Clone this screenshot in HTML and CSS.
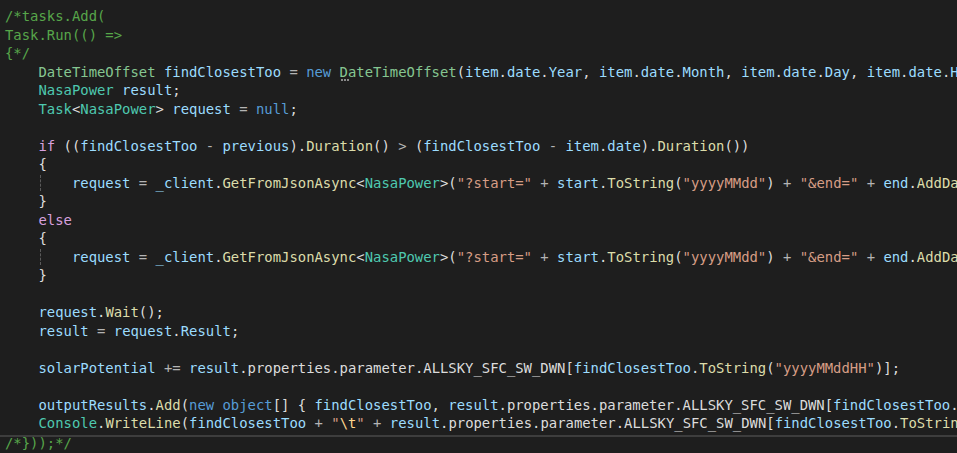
FILE: index.html
```html
<!DOCTYPE html>
<html>
<head>
<meta charset="utf-8">
<link rel="stylesheet" href="styles.css">
</head>
<body>
<div class="editor">
<div class="line"><span class="c">/*tasks.Add(</span></div>
<div class="line"><span class="c">Task.Run(() =&gt;</span></div>
<div class="line"><span class="c">{*/</span></div>
<div class="line">    <span class="s">DateTimeOffset</span> <span class="v">findClosestToo</span> <span class="o">=</span> <span class="k">new</span> <span class="s dots">DateTimeOffset</span>(<span class="v">item</span>.<span class="v">date</span>.<span class="v">Year</span>, <span class="v">item</span>.<span class="v">date</span>.<span class="v">Month</span>, <span class="v">item</span>.<span class="v">date</span>.<span class="v">Day</span>, <span class="v">item</span>.<span class="v">date</span>.<span class="v">Hour</span>, <span class="n">0</span>, <span class="n">0</span>, <span class="s">TimeSpan</span>.Zero);</div>
<div class="line">    <span class="t">NasaPower</span> <span class="v">result</span>;</div>
<div class="line">    <span class="t">Task</span>&lt;<span class="t">NasaPower</span>&gt; <span class="v">request</span> <span class="o">=</span> <span class="k">null</span>;</div>
<div class="line"> </div>
<div class="line">    <span class="x">if</span> ((<span class="v">findClosestToo</span> <span class="o">-</span> <span class="v">previous</span>).<span class="m">Duration</span>() <span class="o">&gt;</span> (<span class="v">findClosestToo</span> <span class="o">-</span> <span class="v">item</span>.<span class="v">date</span>).<span class="m">Duration</span>())</div>
<div class="line">    {</div>
<div class="line">    <span class="guide">    </span><span class="v">request</span> <span class="o">=</span> <span class="v">_client</span>.<span class="m">GetFromJsonAsync</span>&lt;<span class="t">NasaPower</span>&gt;(<span class="q">"?start="</span> <span class="o">+</span> <span class="v">start</span>.<span class="m">ToString</span>(<span class="q">"yyyyMMdd"</span>) <span class="o">+</span> <span class="q">"&amp;end="</span> <span class="o">+</span> <span class="v">end</span>.<span class="m">AddDays</span>(<span class="n">1</span>).<span class="m">ToString</span>(<span class="q">"yyyyMMdd"</span>));</div>
<div class="line">    }</div>
<div class="line">    <span class="x">else</span></div>
<div class="line">    {</div>
<div class="line">    <span class="guide">    </span><span class="v">request</span> <span class="o">=</span> <span class="v">_client</span>.<span class="m">GetFromJsonAsync</span>&lt;<span class="t">NasaPower</span>&gt;(<span class="q">"?start="</span> <span class="o">+</span> <span class="v">start</span>.<span class="m">ToString</span>(<span class="q">"yyyyMMdd"</span>) <span class="o">+</span> <span class="q">"&amp;end="</span> <span class="o">+</span> <span class="v">end</span>.<span class="m">AddDays</span>(<span class="n">1</span>).<span class="m">ToString</span>(<span class="q">"yyyyMMdd"</span>));</div>
<div class="line">    }</div>
<div class="line"> </div>
<div class="line">    <span class="v">request</span>.<span class="m">Wait</span>();</div>
<div class="line">    <span class="v">result</span> <span class="o">=</span> <span class="v">request</span>.<span class="v">Result</span>;</div>
<div class="line"> </div>
<div class="line">    <span class="v">solarPotential</span> <span class="o">+=</span> <span class="v">result</span>.<span class="p">properties</span>.<span class="p">parameter</span>.<span class="p">ALLSKY_SFC_SW_DWN</span>[<span class="v">findClosestToo</span>.<span class="m">ToString</span>(<span class="q">"yyyyMMddHH"</span>)];</div>
<div class="line"> </div>
<div class="line">    <span class="v">outputResults</span>.<span class="m">Add</span>(<span class="k">new</span> <span class="k">object</span>[] { <span class="v">findClosestToo</span>, <span class="v">result</span>.<span class="p">properties</span>.<span class="p">parameter</span>.<span class="p">ALLSKY_SFC_SW_DWN</span>[<span class="v">findClosestToo</span>.<span class="m">ToString</span>(<span class="q">"yyyyMMddHH"</span>)] });</div>
<div class="line">    <span class="t">Console</span>.<span class="m">WriteLine</span>(<span class="v">findClosestToo</span> <span class="o">+</span> <span class="q">"<span class="e">\t</span>"</span> <span class="o">+</span> <span class="v">result</span>.<span class="p">properties</span>.<span class="p">parameter</span>.<span class="p">ALLSKY_SFC_SW_DWN</span>[<span class="v">findClosestToo</span>.<span class="m">ToString</span>(<span class="q">"yyyyMMddHH"</span>)]);</div>
<div class="line last"><span class="c">/*}));*/</span></div>
</div>
</body>
</html>
```
FILE: styles.css
```css
html, body {
  margin: 0;
  padding: 0;
  background: #1e1e1e;
  overflow: hidden;
}
.editor {
  width: 957px;
  height: 453px;
  overflow: hidden;
  padding: 7px 0 0 5px;
  box-sizing: border-box;
  font-family: "DejaVu Sans Mono", "Liberation Mono", monospace;
  font-size: 13.9px;
  color: #dcdcdc;
}
.line {
  white-space: pre;
  height: 18.5px;
  line-height: 18.5px;
}
.last {
  position: relative;
  margin-left: -5px;
  padding-left: 5px;
  padding-top: 1px;
}
.last::before {
  content: "";
  position: absolute;
  left: 0;
  top: 2px;
  width: 957px;
  height: 2px;
  background: #3d3d3d;
}
.c { color: #57a64a; }
.k { color: #569cd6; }
.x { color: #d8a0df; }
.t { color: #4ec9b0; }
.s { color: #86c691; }
.v { color: #9cdcfe; }
.p { color: #dcdcdc; }
.m { color: #dcdcaa; }
.q { color: #d69d85; }
.e { color: #ffd68f; }
.n { color: #b5cea8; }
.o { color: #b4b4b4; }
.dots { position: relative; }
.dots::after {
  content: "";
  position: absolute;
  left: 1px;
  bottom: -1px;
  width: 8px;
  border-bottom: 2px dotted #8a8a8a;
}
.guide { position: relative; }
.guide::before {
  content: "";
  position: absolute;
  left: 2px;
  top: 0;
  bottom: 0;
  border-left: 1px dashed #5a5a5a;
}
```
